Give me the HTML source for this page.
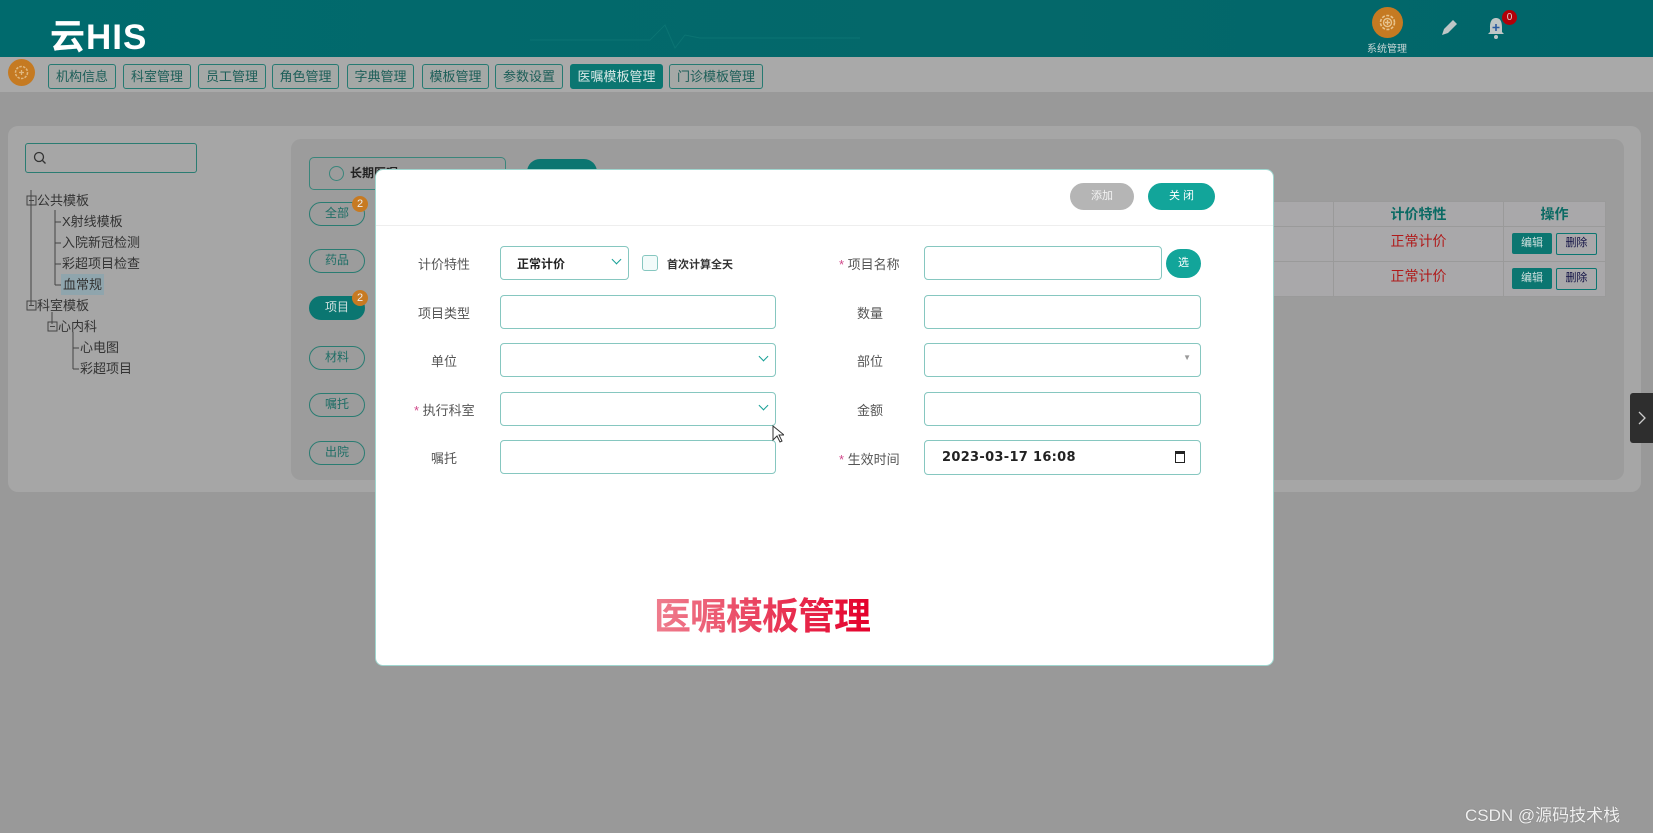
<!DOCTYPE html>
<html><head><meta charset="utf-8">
<style>
*{box-sizing:border-box;margin:0;padding:0}
body{width:1653px;height:833px;overflow:hidden;background:#999;font-family:"Liberation Sans","Noto Sans CJK SC",sans-serif;position:relative;color:#333}
.a{position:absolute}
.hdr{left:0;top:0;width:1653px;height:57px;background:linear-gradient(90deg,#006a6d,#04686a 60%,#00666a)}
.tabbar{left:0;top:57px;width:1653px;height:35px;background:#a9a9a9}
.tab{top:64px;height:25px;border:1px solid #267a72;border-radius:3px;background:#a4a8a6;color:#1c5e58;font-size:13px;line-height:23px;text-align:center}
.tab.on{background:#0b7671;color:#d8e8e6;border-color:#0b7671}
.card{left:8px;top:126px;width:1633px;height:366px;background:#a6a6a6;border-radius:10px}
.inner{left:291px;top:139px;width:1333px;height:341px;background:#9c9c9c;border-radius:10px}
.tree{font-size:13px;color:#333;line-height:21px}
.pill{left:309px;width:56px;height:24px;border:1.5px solid #2a7c72;border-radius:12px;font-size:12px;color:#1f6e66;text-align:center;line-height:21px}
.badge{width:16px;height:16px;border-radius:8px;background:#c77a22;color:#eee;font-size:11px;text-align:center;line-height:16px}
.modal{left:375px;top:169px;width:899px;height:497px;background:#fff;border-radius:8px;border:1px solid #9fd6cf}
.lbl{font-size:13px;color:#555;width:80px;text-align:center}
.inp{height:34px;border:1.5px solid #86c7c0;border-radius:4px;background:#fff}
.star{color:#d0488a;font-size:13px}
.chev{position:absolute;right:8px;top:9px;width:7px;height:7px;border-right:1.5px solid #17a096;border-bottom:1.5px solid #17a096;transform:rotate(45deg)}
td,th{border:1px solid #9a9a9a}
</style></head><body>
<div class="a hdr"></div>
<svg class="a" style="left:530px;top:20px" width="360" height="30"><polyline points="0,20 120,20 135,5 145,28 155,15 170,18 330,18" fill="none" stroke="#1d8a85" stroke-width="1" opacity=".35"/></svg>
<div class="a" style="left:50px;top:9px;font-size:35px;font-weight:bold;color:#fff;letter-spacing:1px">云HIS</div>
<div class="a" style="left:1372px;top:7px;width:31px;height:31px;border-radius:50%;background:#c57a22"></div>
<svg class="a" style="left:1377px;top:12px" width="21" height="21" viewBox="0 0 21 21"><circle cx="10.5" cy="10.5" r="7" fill="none" stroke="#e8c48e" stroke-width="1.6" stroke-dasharray="3 1.5"/><circle cx="10.5" cy="10.5" r="4" fill="none" stroke="#e8c48e" stroke-width="1.4"/><path d="M10.5 8v5M8 10.5h5" stroke="#e8c48e" stroke-width="1.4"/></svg>
<div class="a" style="left:1367px;top:40px;font-size:10px;color:#c9d6d6">系统管理</div>
<svg class="a" style="left:1439px;top:18px" width="20" height="20"><path d="M3 17l2-6 9-9 4 4-9 9z" fill="#bfc6c6"/></svg>
<svg class="a" style="left:1485px;top:16px" width="22" height="24"><path d="M11 2c-5 0-6 5-6 9v5l-2 2h16l-2-2v-5c0-4-1-9-6-9z" fill="#bfc6c6"/><circle cx="11" cy="21" r="2" fill="#bfc6c6"/><path d="M11 8v7M7.5 11.5h7" stroke="#2a5aa0" stroke-width="1.6"/></svg>
<div class="a badge" style="left:1502px;top:10px;background:#b10008;color:#e0d0d0;font-size:10px;width:15px;height:15px;line-height:15px">0</div>

<div class="a tabbar"></div>
<div class="a" style="left:8px;top:59px;width:27px;height:27px;border-radius:50%;background:#c57a22"></div>
<svg class="a" style="left:13px;top:64px" width="17" height="17"><circle cx="8.5" cy="8.5" r="6" fill="none" stroke="#e0b880" stroke-width="1.5" stroke-dasharray="2.5 1.2"/><path d="M8.5 6v5M6 8.5h5" stroke="#e0b880" stroke-width="1.3"/></svg>
<div class="a tab" style="left:48px;width:68px">机构信息</div>
<div class="a tab" style="left:123px;width:68px">科室管理</div>
<div class="a tab" style="left:198px;width:68px">员工管理</div>
<div class="a tab" style="left:272px;width:67px">角色管理</div>
<div class="a tab" style="left:347px;width:67px">字典管理</div>
<div class="a tab" style="left:422px;width:67px">模板管理</div>
<div class="a tab" style="left:495px;width:68px">参数设置</div>
<div class="a tab on" style="left:570px;width:93px">医嘱模板管理</div>
<div class="a tab" style="left:669px;width:94px">门诊模板管理</div>

<div class="a card"></div>
<div class="a" style="left:25px;top:143px;width:172px;height:30px;border:1.5px solid #2a7c72;border-radius:3px"></div>
<svg class="a" style="left:33px;top:151px" width="14" height="14"><circle cx="6" cy="6" r="4.5" fill="none" stroke="#333" stroke-width="1.3"/><path d="M9.5 9.5l3 3" stroke="#333" stroke-width="1.3"/></svg>
<svg class="a" style="left:25px;top:190px" width="60" height="190" fill="none" stroke="#444" stroke-width="1">
<line x1="6" y1="0" x2="6" y2="115"/><rect x="2" y="6" width="9" height="9"/><line x1="4" y1="10.5" x2="9" y2="10.5"/>
<line x1="30" y1="20" x2="30" y2="95"/><line x1="30" y1="32" x2="36" y2="32"/><line x1="30" y1="53" x2="36" y2="53"/><line x1="30" y1="74" x2="36" y2="74"/><line x1="30" y1="95" x2="36" y2="95"/>
<rect x="2" y="111" width="9" height="9"/><line x1="4" y1="115.5" x2="9" y2="115.5"/>
<line x1="27" y1="122" x2="27" y2="134"/><rect x="23" y="132" width="9" height="9"/><line x1="25" y1="136.5" x2="30" y2="136.5"/>
<line x1="48" y1="142" x2="48" y2="179"/><line x1="48" y1="158" x2="54" y2="158"/><line x1="48" y1="179" x2="54" y2="179"/>
</svg>
<div class="a tree" style="left:37px;top:190px">公共模板</div>
<div class="a tree" style="left:62px;top:211px">X射线模板</div>
<div class="a tree" style="left:62px;top:232px">入院新冠检测</div>
<div class="a tree" style="left:62px;top:253px">彩超项目检查</div>
<div class="a tree" style="left:61px;top:274px;background:#8fa5ad;padding:0 2px">血常规</div>
<div class="a tree" style="left:37px;top:295px">科室模板</div>
<div class="a tree" style="left:58px;top:316px">心内科</div>
<div class="a tree" style="left:80px;top:337px">心电图</div>
<div class="a tree" style="left:80px;top:358px">彩超项目</div>

<div class="a inner"></div>
<div class="a" style="left:309px;top:157px;width:197px;height:33px;border:1.5px solid #3a857b;border-radius:5px"></div>
<div class="a" style="left:329px;top:166px;width:15px;height:15px;border:1.5px solid #3a857b;border-radius:50%"></div>
<div class="a" style="left:350px;top:164px;font-size:12px;font-weight:bold;color:#222">长期医嘱</div>
<div class="a" style="left:527px;top:159px;width:70px;height:26px;border-radius:13px;background:#0b7671"></div>
<div class="a pill" style="top:202px">全部</div><div class="a badge" style="left:352px;top:196px">2</div>
<div class="a pill" style="top:249px">药品</div>
<div class="a pill" style="top:296px;background:#0b7671;border-color:#0b7671;color:#cfe0de">项目</div><div class="a badge" style="left:352px;top:290px">2</div>
<div class="a pill" style="top:346px">材料</div>
<div class="a pill" style="top:393px">嘱托</div>
<div class="a pill" style="top:441px">出院</div>

<table class="a" style="left:1160px;top:201px;width:446px;border-collapse:collapse;background:#a9a8aa;font-size:14px;text-align:center">
<tr style="height:25px"><th style="width:173px"></th><th style="width:170px;color:#0b6a64">计价特性</th><th style="color:#0b6a64">操作</th></tr>
<tr style="height:35px"><td></td><td style="color:#b01a1a;vertical-align:top;padding-top:4px">正常计价</td><td><span style="display:inline-block;width:40px;height:21px;background:#0b7671;color:#cfe0de;font-size:11px;line-height:21px;border-radius:2px">编辑</span> <span style="display:inline-block;width:41px;height:22px;border:1.5px solid #0b7671;color:#114;font-size:11px;line-height:19px;border-radius:2px">删除</span></td></tr>
<tr style="height:35px"><td></td><td style="color:#b01a1a;vertical-align:top;padding-top:4px">正常计价</td><td><span style="display:inline-block;width:40px;height:21px;background:#0b7671;color:#cfe0de;font-size:11px;line-height:21px;border-radius:2px">编辑</span> <span style="display:inline-block;width:41px;height:22px;border:1.5px solid #0b7671;color:#114;font-size:11px;line-height:19px;border-radius:2px">删除</span></td></tr>
</table>

<div class="a" style="left:1630px;top:393px;width:23px;height:50px;background:#2e2e2e;border-radius:3px 0 0 3px"></div>
<svg class="a" style="left:1637px;top:411px" width="10" height="14"><path d="M2 1l6 6-6 6" fill="none" stroke="#ccc" stroke-width="1.3"/></svg>

<div class="a modal"></div>
<div class="a" style="left:1070px;top:183px;width:64px;height:27px;border-radius:14px;background:#b5b5b5;color:#f4f4f4;font-size:11px;text-align:center;line-height:27px">添加</div>
<div class="a" style="left:1148px;top:183px;width:67px;height:27px;border-radius:14px;background:#12a59a;color:#fff;font-size:11px;text-align:center;line-height:27px">关 闭</div>
<div class="a" style="left:376px;top:225px;width:897px;height:1px;background:#eee"></div>

<div class="a lbl" style="left:404px;top:254px">计价特性</div>
<div class="a inp" style="left:500px;top:246px;width:129px"><span style="position:absolute;left:16px;top:8px;font-size:12px;font-weight:bold;color:#222">正常计价</span><i class="chev"></i></div>
<div class="a" style="left:642px;top:255px;width:16px;height:16px;border:1.5px solid #86c7c0;border-radius:3px;background:#f2fbfa"></div>
<div class="a" style="left:667px;top:256px;font-size:11px;font-weight:bold;color:#333">首次计算全天</div>
<div class="a lbl" style="left:404px;top:303px">项目类型</div>
<div class="a inp" style="left:500px;top:295px;width:276px"></div>
<div class="a lbl" style="left:404px;top:351px">单位</div>
<div class="a inp" style="left:500px;top:343px;width:276px"><i class="chev"></i></div>
<div class="a" style="left:414px;top:400px"><span class="star">* </span><span style="font-size:13px;color:#555">执行科室</span></div>
<div class="a inp" style="left:500px;top:392px;width:276px"><i class="chev"></i></div>
<div class="a lbl" style="left:404px;top:448px">嘱托</div>
<div class="a inp" style="left:500px;top:440px;width:276px"></div>

<div class="a" style="left:839px;top:254px"><span class="star">* </span><span style="font-size:13px;color:#555">项目名称</span></div>
<div class="a inp" style="left:924px;top:246px;width:238px"></div>
<div class="a" style="left:1166px;top:249px;width:35px;height:29px;border-radius:15px;background:#12a59a;color:#fff;font-size:11px;text-align:center;line-height:29px">选</div>
<div class="a lbl" style="left:830px;top:303px">数量</div>
<div class="a inp" style="left:924px;top:295px;width:277px"></div>
<div class="a lbl" style="left:830px;top:351px">部位</div>
<div class="a inp" style="left:924px;top:343px;width:277px"><span style="position:absolute;right:9px;top:9px;font-size:8px;color:#999">▼</span></div>
<div class="a lbl" style="left:830px;top:400px">金额</div>
<div class="a inp" style="left:924px;top:392px;width:277px"></div>
<div class="a" style="left:839px;top:449px"><span class="star">* </span><span style="font-size:13px;color:#555">生效时间</span></div>
<div class="a inp" style="left:924px;top:440px;width:277px;height:35px"><span style="position:absolute;left:17px;top:9px;font-size:13px;font-weight:bold;color:#222;font-family:'DejaVu Sans',sans-serif;letter-spacing:.3px">2023-03-17 16:08</span><span style="position:absolute;right:15px;top:10px;width:10px;height:12px;border:1.5px solid #222;border-top-width:3px"></span></div>
<svg class="a" style="left:772px;top:425px" width="12" height="18"><path d="M1 1v14l4-4 3 6 2-1-3-6h5z" fill="#fff" stroke="#333" stroke-width="1"/></svg>

<div class="a" style="left:654px;top:586px;font-size:37px;font-weight:bold;letter-spacing:-1px;background:linear-gradient(90deg,#ef7f8f,#e4002b);-webkit-background-clip:text;background-clip:text;color:transparent">医嘱模板管理</div>

<div class="a" style="left:1465px;top:801px;font-size:17px;color:#f0f0f0;text-shadow:0 0 1px #666">CSDN @源码技术栈</div>
</body></html>
